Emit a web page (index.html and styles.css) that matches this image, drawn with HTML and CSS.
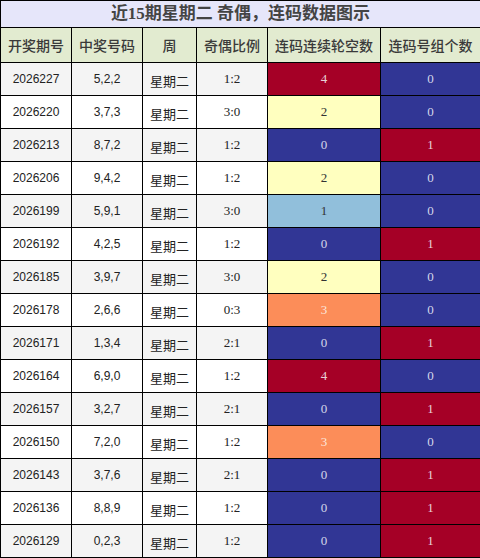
FILE: index.html
```html
<!DOCTYPE html>
<html>
<head>
<meta charset="utf-8">
<link rel="stylesheet" href="styles.css">
</head>
<body>
<table class="tbl">
  <colgroup>
    <col class="c1"><col class="c2"><col class="c3"><col class="c4"><col class="c5"><col class="c6">
  </colgroup>
  <tr class="title-row"><td colspan="6" class="title">近15期星期二 奇偶，连码数据图示</td></tr>
  <tr class="head-row">
    <th>开奖期号</th><th>中奖号码</th><th>周</th><th>奇偶比例</th><th>连码连续轮空数</th><th>连码号组个数</th>
  </tr>
  <tr class="odd"><td class="num">2026227</td><td class="num">5,2,2</td><td class="wk">星期二</td><td class="ratio">1:2</td><td class="v red">4</td><td class="v blue">0</td></tr>
  <tr class="even"><td class="num">2026220</td><td class="num">3,7,3</td><td class="wk">星期二</td><td class="ratio">3:0</td><td class="v yellow">2</td><td class="v blue">0</td></tr>
  <tr class="odd"><td class="num">2026213</td><td class="num">8,7,2</td><td class="wk">星期二</td><td class="ratio">1:2</td><td class="v blue">0</td><td class="v red">1</td></tr>
  <tr class="even"><td class="num">2026206</td><td class="num">9,4,2</td><td class="wk">星期二</td><td class="ratio">1:2</td><td class="v yellow">2</td><td class="v blue">0</td></tr>
  <tr class="odd"><td class="num">2026199</td><td class="num">5,9,1</td><td class="wk">星期二</td><td class="ratio">3:0</td><td class="v lblue">1</td><td class="v blue">0</td></tr>
  <tr class="even"><td class="num">2026192</td><td class="num">4,2,5</td><td class="wk">星期二</td><td class="ratio">1:2</td><td class="v blue">0</td><td class="v red">1</td></tr>
  <tr class="odd"><td class="num">2026185</td><td class="num">3,9,7</td><td class="wk">星期二</td><td class="ratio">3:0</td><td class="v yellow">2</td><td class="v blue">0</td></tr>
  <tr class="even"><td class="num">2026178</td><td class="num">2,6,6</td><td class="wk">星期二</td><td class="ratio">0:3</td><td class="v orange">3</td><td class="v blue">0</td></tr>
  <tr class="odd"><td class="num">2026171</td><td class="num">1,3,4</td><td class="wk">星期二</td><td class="ratio">2:1</td><td class="v blue">0</td><td class="v red">1</td></tr>
  <tr class="even"><td class="num">2026164</td><td class="num">6,9,0</td><td class="wk">星期二</td><td class="ratio">1:2</td><td class="v red">4</td><td class="v blue">0</td></tr>
  <tr class="odd"><td class="num">2026157</td><td class="num">3,2,7</td><td class="wk">星期二</td><td class="ratio">2:1</td><td class="v blue">0</td><td class="v red">1</td></tr>
  <tr class="even"><td class="num">2026150</td><td class="num">7,2,0</td><td class="wk">星期二</td><td class="ratio">1:2</td><td class="v orange">3</td><td class="v blue">0</td></tr>
  <tr class="odd"><td class="num">2026143</td><td class="num">3,7,6</td><td class="wk">星期二</td><td class="ratio">2:1</td><td class="v blue">0</td><td class="v red">1</td></tr>
  <tr class="even"><td class="num">2026136</td><td class="num">8,8,9</td><td class="wk">星期二</td><td class="ratio">1:2</td><td class="v blue">0</td><td class="v red">1</td></tr>
  <tr class="odd"><td class="num">2026129</td><td class="num">0,2,3</td><td class="wk">星期二</td><td class="ratio">1:2</td><td class="v blue">0</td><td class="v red">1</td></tr>
</table>
</body>
</html>
```
FILE: styles.css
```css
html, body {
  margin: 0;
  padding: 0;
  background: #ffffff;
}
.tbl {
  border-collapse: collapse;
  width: 480px;
  table-layout: fixed;
  font-family: "Liberation Serif", "Noto Sans CJK SC", serif;
  color: #222;
}
.c1 { width: 71px; }
.c2 { width: 71px; }
.c3 { width: 54px; }
.c4 { width: 71px; }
.c5 { width: 113px; }
.c6 { width: 100px; }
.tbl td, .tbl th {
  border: 1px solid #000;
  padding: 0;
  text-align: center;
  vertical-align: middle;
}
.title-row td {
  height: 26px;
}
.title {
  background: #e6e6fa;
  font-size: 17px;
  font-weight: bold;
  color: #444;
  line-height: 26px;
}
.head-row th {
  height: 34px;
  background: #e2ebd0;
  font-family: "Noto Sans CJK SC", sans-serif;
  font-size: 14px;
  font-weight: 500;
  color: #3a3a3a;
}
.odd td, .even td {
  height: 32px;
  font-size: 13px;
  line-height: 16px;
}
.odd { background: #f4f4f4; }
.even { background: #ffffff; }
.tbl .num {
  font-family: "Liberation Sans", "Noto Sans CJK SC", sans-serif;
  font-size: 12px;
  color: #222;
}
.tbl .wk {
  font-family: "Noto Sans CJK SC", sans-serif;
  font-size: 13px;
  color: #222;
  padding-top: 3px;
  height: 29px;
}
.ratio {
  color: #222;
}
.v { color: #222; }
.red { background: #a50026; color: #e8d0d6; }
.blue { background: #313695; color: #d4d6ea; }
.yellow { background: #ffffbf; color: #333; }
.lblue { background: #91bfdb; color: #333; }
.orange { background: #fc8d59; color: #fbe6dc; }
```
